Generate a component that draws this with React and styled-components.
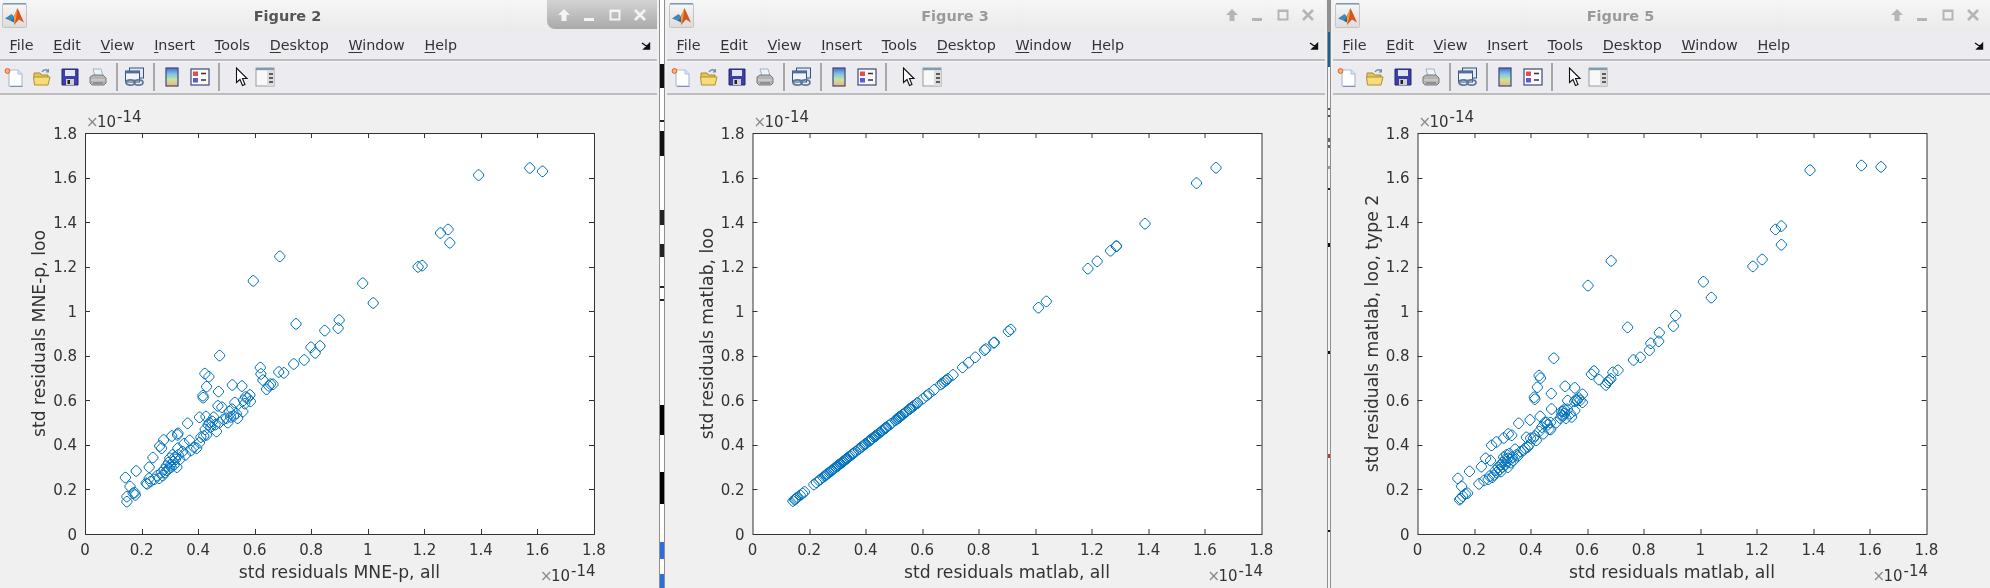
import React from 'react';
import styled, { createGlobalStyle } from 'styled-components';

const Global = createGlobalStyle`
  html, body { margin: 0; padding: 0; background: #f0f0f0; overflow: hidden; }
  #root { width: 1990px; height: 588px; }
`;

const Desktop = styled.div`
  display: flex;
  width: 1990px;
  height: 588px;
  font-family: "DejaVu Sans", sans-serif;
  background: #f0f0f0;
  filter: blur(0.35px);
`;
const FigureWindow = styled.section`
  display: flex;
  flex-direction: column;
  width: ${p => p.$width}px;
  height: 588px;
  flex: none;
`;
const TitleBar = styled.header`
  display: flex;
  align-items: flex-start;
  height: 32px;
  flex: none;
  background: linear-gradient(#f6f6f6, #eaeaea);
`;
const AppIcon = styled.svg`
  width: 26px;
  height: 26px;
  margin: 3px 0 0 2px;
  flex: none;
`;
const TitleText = styled.h1`
  flex: 1;
  margin: 0;
  text-align: center;
  font-size: 14.5px;
  line-height: 32px;
  font-weight: 700;
  color: ${p => (p.$active ? '#555' : '#9a9a9a')};
`;
const Controls = styled.div`
  display: flex;
  align-items: center;
  justify-content: space-around;
  box-sizing: border-box;
  width: 110px;
  height: 29px;
  padding: 0 4px;
  border-bottom-left-radius: 8px;
  box-shadow: ${p => (p.$active ? '2px 0 0 #a9a9a9' : 'none')};
  background: ${p => (p.$active ? 'linear-gradient(#d4d4d4, #a9a9a9)' : 'transparent')};
  color: ${p => (p.$active ? '#f4f4f4' : '#b5b5b5')};
`;
const ControlIcon = styled.svg`
  width: 16px;
  height: 16px;
`;
const MenuBar = styled.nav`
  display: flex;
  align-items: center;
  height: 27px;
  flex: none;
  background: #ecebef;
  border-bottom: 2px solid #bdbdbd;
`;
const MenuItem = styled.span`
  padding: 0 10.2px 0 9.5px;
  font-size: 14.3px;
  line-height: 27px;
  color: #333;
  & > u { text-underline-offset: 2px; }
`;
const DockArrow = styled.svg`
  width: 10px;
  height: 8px;
  margin: 0 6px 0 auto;
`;
const ToolBar = styled.div`
  display: flex;
  align-items: center;
  height: 32px;
  flex: none;
  background: #ecebef;
  border-bottom: 2px solid #bdbdbd;
  box-shadow: inset 0 1px 0 #f6f6f8;
`;
const ToolButton = styled.span`
  display: flex;
  align-items: center;
  justify-content: center;
  width: 28px;
  height: 22px;
  flex: none;
`;
const ToolSep = styled.span`
  width: 2px;
  height: 28px;
  margin: 0 3px 0 4px;
  background: #a8a8a8;
  flex: none;
`;
const Canvas = styled.svg`
  display: block;
  flex: 1;
  width: 100%;
  background: #f0f0f0;
  font-family: "DejaVu Sans", sans-serif;
`;
const Divider = styled.div`
  box-sizing: border-box;
  width: ${p => p.$width}px;
  height: 588px;
  flex: none;
  margin-left: ${p => p.$offset}px;
  border-left: 1.5px solid #8f8f8f;
  border-right: 1.5px solid #8f8f8f;
`;
const Gutter = styled.div`
  display: flex;
  width: ${p => p.$width}px;
  flex: none;
  background: #f0f0f0;
`;

const stripes = (bits, base) => {
  const stops = [];
  bits.forEach(([a, b, c]) => stops.push(`${base} ${a}px`, `${c} ${a}px`, `${c} ${b}px`, `${base} ${b}px`));
  return `linear-gradient(${stops.join(', ')}, ${base} 588px)`;
};

const frameOne = [[64, 88, '#111'], [120, 122, '#222'], [131, 156, '#111'], [210, 225, '#222'], [244, 257, '#222'], [286, 288, '#222'], [299, 301, '#222'], [405, 435, '#000'], [472, 504, '#000'], [542, 559, '#2a6fe0'], [574, 588, '#2a6fe0']];
const frameTwo = [[0, 32, '#909090'], [32, 67, '#1f5f98'], [108, 110, '#555'], [115, 117, '#555'], [138, 142, '#666'], [145, 148, '#666'], [166, 169, '#999'], [188, 190, '#222'], [243, 247, '#111'], [351, 354, '#111'], [454, 458, '#b04040'], [530, 532, '#111']];

const MatlabIcon = () => (
  <AppIcon viewBox="0 0 26 26">
    <defs>
      <linearGradient id="matlabTile" x1="0" y1="0" x2="0" y2="1">
        <stop offset="0" stopColor="#f7f7f7" />
        <stop offset="1" stopColor="#dcdcdc" />
      </linearGradient>
    </defs>
    <rect x=".5" y=".5" width="24" height="24" rx="1" fill="url(#matlabTile)" stroke="#c4c4c4" />
    <rect x="1" y="0" width="23" height="1.6" fill="#7d9db4" />
    <path d="M3 15.5L9.5 11L12 13.5L8 17.5Z" fill="#3f86bd" />
    <path d="M8 17.5L12 13.5L13.5 9.5L12 19.5Z" fill="#2f6ea5" />
    <path d="M12 13.5L15.5 5L22 19.5L17 16.5L12 22Z" fill="#d9531e" />
    <path d="M12 13.5L15.5 5L14 16L12 22Z" fill="#f0a030" />
  </AppIcon>
);

const IconUp = () => (
  <ControlIcon viewBox="0 0 16 16"><path d="M8 2L14 8H10.5V14H5.5V8H2Z" fill="currentColor" /></ControlIcon>
);
const IconMin = () => (
  <ControlIcon viewBox="0 0 16 16"><rect x="3" y="11" width="10" height="3" fill="currentColor" /></ControlIcon>
);
const IconMax = () => (
  <ControlIcon viewBox="0 0 16 16"><path d="M2.5 2.5H13.5V13.5H2.5ZM4.5 5V11.5H11.5V5Z" fill="currentColor" fillRule="evenodd" /></ControlIcon>
);
const IconClose = () => (
  <ControlIcon viewBox="0 0 16 16"><path d="M3 3L13 13M13 3L3 13" stroke="currentColor" strokeWidth="2.6" /></ControlIcon>
);

const NewFile = () => (
  <svg width="20" height="21" viewBox="0 0 20 21">
    <path d="M5 3H14L18 7V19H5Z" fill="#fff" stroke="#a9c0dc" strokeWidth="1.2" />
    <path d="M14 3V7H18" fill="#dfe8f4" stroke="#a9c0dc" />
    <path d="M6 19.5H18.5" stroke="#7f93ad" />
    <circle cx="3.5" cy="4" r="2.4" fill="#f6b08a" stroke="#e2621b" strokeWidth="1" />
  </svg>
);
const OpenFolder = () => (
  <svg width="20" height="20" viewBox="0 0 20 20">
    <path d="M2 6H8L9.5 8H16V11H2Z" fill="#e6c65a" stroke="#a8892a" />
    <path d="M1.5 10H18L16 18H2.5Z" fill="#f6dd7a" stroke="#b0912c" />
    <path d="M10 5C11.5 2.5 14 2.5 16 3.5" fill="none" stroke="#6b8fb5" strokeWidth="1.4" />
    <path d="M17 1.5V5.5H13.5Z" fill="#6b8fb5" />
  </svg>
);
const SaveDisk = () => (
  <svg width="20" height="20" viewBox="0 0 20 20">
    <path d="M2 2H18V18H2Z" fill="#3c3fa8" stroke="#26286e" />
    <rect x="5" y="3" width="10" height="6" fill="#e4e6f4" />
    <rect x="6" y="12" width="8" height="6" fill="#cfcfd6" />
    <rect x="7.5" y="13" width="2.5" height="4" fill="#222" />
  </svg>
);
const Printer = () => (
  <svg width="20" height="20" viewBox="0 0 20 20">
    <path d="M5 2H13L15 9H7Z" fill="#eef3f8" stroke="#9fb3c6" />
    <path d="M2 10L5 8H15L18 11V16L16 18H4L2 16Z" fill="#b4b4b4" stroke="#7a7a7a" />
    <path d="M3 13H17" stroke="#dadada" />
    <path d="M5 16H15" stroke="#6c6c6c" />
  </svg>
);
const LinkWindows = () => (
  <svg width="22" height="20" viewBox="0 0 22 20">
    <rect x="5.5" y="1" width="14" height="10" fill="#e3e9f2" stroke="#34537e" />
    <rect x="1.5" y="4" width="14" height="11" fill="#f1f4f8" stroke="#34537e" />
    <rect x="1.5" y="4" width="14" height="2.4" fill="#4c6f9e" />
    <ellipse cx="6.5" cy="15.5" rx="4.5" ry="2.6" fill="none" stroke="#5a7899" strokeWidth="1.7" />
    <ellipse cx="14.5" cy="15.5" rx="4.5" ry="2.6" fill="none" stroke="#5a7899" strokeWidth="1.7" />
  </svg>
);
const Colorbar = () => (
  <svg width="14" height="20" viewBox="0 0 14 20">
    <defs>
      <linearGradient id="cbar" x1="0" y1="0" x2="0" y2="1">
        <stop offset="0" stopColor="#5566d8" />
        <stop offset=".35" stopColor="#7fc8e0" />
        <stop offset=".65" stopColor="#c6e4a0" />
        <stop offset="1" stopColor="#f2b078" />
      </linearGradient>
    </defs>
    <rect x="1" y="1" width="12" height="18" fill="url(#cbar)" stroke="#3b4a78" strokeWidth="1.2" />
  </svg>
);
const Legend = () => (
  <svg width="20" height="18" viewBox="0 0 20 18">
    <rect x="1" y="1" width="18" height="16" fill="#fafafa" stroke="#3b4a78" strokeWidth="1.2" />
    <rect x="3" y="3.5" width="5" height="4.5" fill="#e05050" />
    <rect x="3" y="10" width="5" height="4.5" fill="#5a5ae0" />
    <path d="M11 5.5H16M11 12H16" stroke="#333" strokeWidth="1.4" />
  </svg>
);
const PointerGlyph = styled.svg`
  margin-left: 10px;
`;
const Pointer = () => (
  <PointerGlyph width="14" height="20" viewBox="0 0 14 20">
    <path d="M1.5 1V15.5L5 12.5L7.5 18.5L10 17.5L7.5 11.5H12Z" fill="#fff" stroke="#111" strokeWidth="1.1" />
  </PointerGlyph>
);
const Panel = () => (
  <svg width="20" height="20" viewBox="0 0 20 20">
    <rect x="1" y="1" width="18" height="18" fill="#f8f8f8" stroke="#9a9a9a" />
    <rect x="1" y="1" width="18" height="2.2" fill="#7d9db4" />
    <rect x="12" y="3" width="7" height="16" fill="#dcdcdc" />
    <path d="M14 7H18M14 11H18M14 15H18" stroke="#333" strokeWidth="1.4" />
  </svg>
);

const menus = [['F', 'ile'], ['E', 'dit'], ['V', 'iew'], ['I', 'nsert'], ['T', 'ools'], ['D', 'esktop'], ['W', 'indow'], ['H', 'elp']];

const TICKS = [0, .2, .4, .6, .8, 1, 1.2, 1.4, 1.6, 1.8];
const W = 509, H = 401, TOP = 38;
const BLUE = '#0072bd';
const INK = '#333';
const MARKER = 'M-1,-5.2 L1,-5.2 L5,-1 L5,1 L1,5.2 L-1,5.2 L-5,1 L-5,-1Z';

const Exponent = ({ x, y }) => (
  <g>
    <text x={x} y={y} fontSize="15" fill="#8a8a8a">×</text>
    <text x={x + 11} y={y} fontSize="15" fill={INK}>10</text>
    <text x={x + 31} y={y - 5} fontSize="15" fill={INK}>-14</text>
  </g>
);

const Axes = ({ points, xlabel, ylabel, left }) => {
  const sx = v => (v / 1.8) * W;
  const sy = v => H - (v / 1.8) * H;
  return (
    <Canvas>
      <g transform={`translate(${left} ${TOP})`}>
        <rect x="0.5" y="0.5" width={W} height={H} fill="#fff" stroke="#333" />
        {TICKS.map(t => (
          <g key={t}>
            {t > 0 && t < 1.8 && (
              <path
                d={`M${Math.round(sx(t)) + .5} 0v5M${Math.round(sx(t)) + .5} ${H}v-5M0 ${Math.round(sy(t)) + .5}h5M${W} ${Math.round(sy(t)) + .5}h-5`}
                stroke="#333"
                fill="none"
              />
            )}
            <text x={sx(t)} y={H + 21} fontSize="15" fill={INK} textAnchor="middle">{String(t)}</text>
            <text x={-8} y={sy(t) + 5.5} fontSize="15" fill={INK} textAnchor="end">{String(t)}</text>
          </g>
        ))}
        {points.map(([a, b], i) => (
          <path key={i} d={MARKER} transform={`translate(${sx(a).toFixed(1)} ${sy(b).toFixed(1)})`} fill="none" stroke={BLUE} />
        ))}
        <text x={W / 2} y={H + 44} fontSize="17.2" fill={INK} textAnchor="middle">{xlabel}</text>
        <text transform={`translate(-40 ${H / 2}) rotate(-90)`} fontSize="17.2" fill={INK} textAnchor="middle">{ylabel}</text>
        <Exponent x={1} y={-6} />
        <Exponent x={W - 54} y={H + 47} />
      </g>
    </Canvas>
  );
};

const fig2 = [
  [1.618,1.628],[1.573,1.643],[1.392,1.611],[1.284,1.367],[1.257,1.351],[1.29,1.307],[1.192,1.205],[1.178,1.199],[.982,1.126],[1.019,1.037],[.689,1.246],[.595,1.136],[.899,.96],[.895,.924],[.848,.913],[.746,.943],[.831,.844],[.799,.838],[.814,.813],[.775,.781],[.738,.763],[.703,.723],[.685,.727],[.62,.747],[.622,.718],[.629,.691],[.476,.801],[.424,.72],[.438,.706],[.43,.661],[.472,.639],[.521,.669],[.555,.664],[.642,.65],[.656,.673],[.665,.672],[.65,.665],[.583,.624],[.417,.621],[.418,.612],
  [.143,.253],[.181,.283],[.159,.213],[.148,.168],[.148,.145],[.176,.186],[.178,.175],[.17,.183],[.216,.228],[.227,.25],[.227,.30],[.24,.343],[.264,.395],[.278,.422],[.271,.385],[.307,.44],[.329,.452],[.327,.445],[.363,.497],[.405,.524],[.428,.527],[.455,.524],[.484,.569],[.47,.575],
  [.22,.225],[.232,.235],[.245,.245],[.255,.262],[.262,.25],[.27,.275],[.275,.262],[.28,.29],[.283,.275],[.288,.305],[.29,.285],[.295,.32],[.298,.295],[.30,.34],[.303,.31],[.305,.30],[.31,.355],[.312,.325],[.315,.31],[.318,.345],[.32,.335],[.325,.30],[.328,.385],[.33,.355],[.335,.335],[.345,.37],[.35,.405],[.355,.355],[.37,.42],[.375,.375],[.385,.39],[.395,.385],[.405,.41],[.41,.435],[.42,.44],[.425,.47],[.43,.445],[.435,.49],[.44,.50],[.445,.48],[.45,.505],[.46,.49],[.465,.46],[.475,.50],[.49,.515],[.50,.52],[.505,.50],[.51,.55],[.515,.525],[.52,.56],[.525,.53],[.53,.59],[.535,.54],[.54,.52],[.56,.60],[.565,.585],[.568,.615],[.558,.55],[.585,.595],[.575,.61]
];

const fig5 = [
  [1.639,1.648],[1.57,1.654],[1.388,1.633],[1.287,1.382],[1.266,1.367],[1.287,1.298],[1.219,1.232],[1.186,1.201],[1.011,1.132],[1.039,1.061],[.685,1.226],[.603,1.115],[.913,.981],[.905,.933],[.855,.903],[.743,.928],[.853,.865],[.825,.856],[.82,.825],[.788,.793],[.764,.781],[.709,.735],[.691,.726],[.624,.731],[.615,.717],[.642,.693],[.684,.696],[.672,.681],[.666,.669],[.678,.69],[.482,.789],[.43,.711],[.435,.70],[.424,.659],[.473,.63],[.522,.663],[.556,.656],[.583,.627],[.413,.614],[.415,.605],[.583,.591],[.56,.603],[.556,.595],[.565,.60],[.531,.599],[.474,.561],[.516,.551],[.51,.535],[.556,.554],[.398,.512],[.434,.528],[.358,.497],[.456,.501],[.471,.469],[.385,.434],[.333,.443],[.321,.449],[.305,.431],[.279,.413],[.262,.398],[.184,.281],[.143,.249],[.156,.214],[.149,.154],[.152,.16],[.169,.18],[.177,.183],[.16,.17],[.241,.34],[.226,.302],[.217,.225],
  [.235,.24],[.25,.245],[.255,.26],[.265,.255],[.27,.265],[.258,.33],[.275,.285],[.28,.275],[.285,.30],[.29,.29],[.295,.31],[.295,.28],[.30,.32],[.30,.30],[.305,.345],[.31,.335],[.31,.31],[.315,.355],[.315,.325],[.32,.34],[.32,.30],[.325,.36],[.33,.335],[.33,.32],[.335,.345],[.34,.33],[.345,.38],[.35,.355],[.355,.35],[.365,.37],[.375,.375],[.38,.385],[.39,.39],[.395,.40],[.40,.43],[.41,.43],[.415,.44],[.42,.42],[.43,.46],[.44,.48],[.445,.45],[.45,.50],[.46,.49],[.465,.47],[.47,.50],[.49,.50],[.505,.52],[.51,.55],[.515,.53],[.52,.56],[.52,.54],[.525,.52],[.53,.56],[.54,.54],[.545,.525],[.575,.60],[.57,.61]
];

const fig3 = fig5.map(([a]) => [a, +(a + .005).toFixed(3)]);

const Figure = ({ n, width, active, left, points, xlabel, ylabel }) => (
  <FigureWindow $width={width}>
    <TitleBar>
      <MatlabIcon />
      <TitleText $active={active}>Figure {n}</TitleText>
      <Controls $active={active}>
        <IconUp /><IconMin /><IconMax /><IconClose />
      </Controls>
    </TitleBar>
    <MenuBar>
      {menus.map(([k, rest]) => (
        <MenuItem key={k}><u>{k}</u>{rest}</MenuItem>
      ))}
      <DockArrow viewBox="0 0 10 8">
        <path d="M1 1L6 4.5M8.5 1.5V7H3Z" fill="#111" stroke="#111" strokeWidth="1.4" />
      </DockArrow>
    </MenuBar>
    <ToolBar>
      <ToolButton><NewFile /></ToolButton>
      <ToolButton><OpenFolder /></ToolButton>
      <ToolButton><SaveDisk /></ToolButton>
      <ToolButton><Printer /></ToolButton>
      <ToolSep />
      <ToolButton><LinkWindows /></ToolButton>
      <ToolSep />
      <ToolButton><Colorbar /></ToolButton>
      <ToolButton><Legend /></ToolButton>
      <ToolSep />
      <ToolButton><Pointer /></ToolButton>
      <ToolButton><Panel /></ToolButton>
    </ToolBar>
    <Axes points={points} xlabel={xlabel} ylabel={ylabel} left={left} />
  </FigureWindow>
);

export default function App() {
  return (
    <Desktop>
      <Global />
      <Figure n={2} width={657} active left={85} points={fig2} xlabel="std residuals MNE-p, all" ylabel="std residuals MNE-p, loo" />
      <Gutter $width={10}>
        <Divider $width={6} $offset={2} style={{ background: stripes(frameOne, '#fff') }} />
      </Gutter>
      <Figure n={3} width={658} left={85.5} points={fig3} xlabel="std residuals matlab, all" ylabel="std residuals matlab, loo" />
      <Gutter $width={8}>
        <Divider $width={3.5} $offset={2} style={{ background: stripes(frameTwo, '#f4f4f4') }} />
      </Gutter>
      <Figure n={5} width={657} left={84.5} points={fig5} xlabel="std residuals matlab, all" ylabel="std residuals matlab, loo, type 2" />
    </Desktop>
  );
}
